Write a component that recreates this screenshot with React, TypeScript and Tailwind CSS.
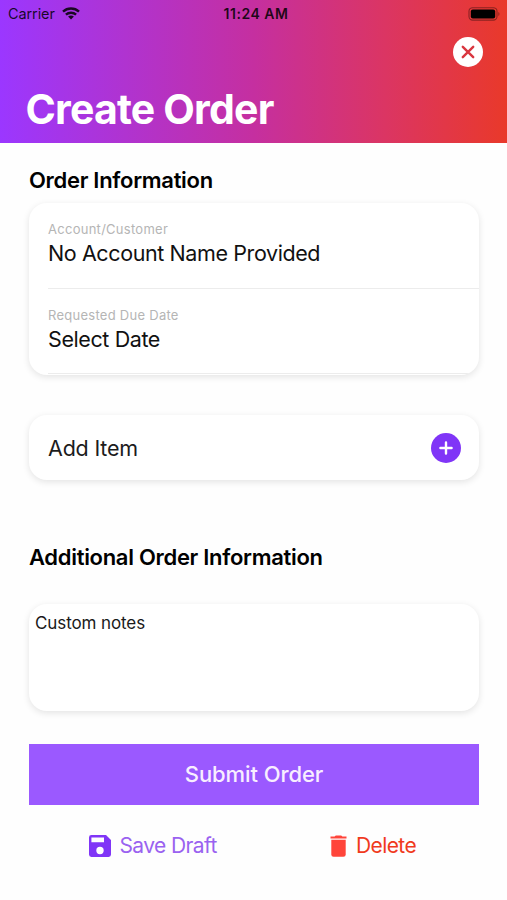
import { useState } from 'react';
import type { ReactNode } from 'react';

function StatusBar() {
  return (
    <div className="grid h-[27px] grid-cols-3 items-center pl-2 pr-[6px] text-black/85">
      <div className="flex items-center gap-[7px]">
        <span className="text-[14.5px] tracking-[-0.1px]">Carrier</span>
        <svg width="18" height="13" viewBox="0 0 18 13" fill="none" stroke="currentColor" strokeWidth="2.4">
          <path d="M1 4.6C5.5 0.4 12.5 0.4 17 4.6" />
          <path d="M3.9 7.7C6.8 5 11.2 5 14.1 7.7" />
          <path d="M9 12.4L6.1 9.6C7.7 8.1 10.3 8.1 11.9 9.6Z" fill="currentColor" stroke="none" />
        </svg>
      </div>
      <span className="pl-[3px] text-center text-[14px] font-semibold tracking-[0.5px]">11:24 AM</span>
      <svg className="justify-self-end" width="33" height="14" viewBox="0 0 33 14">
        <rect x="1" y="0.7" width="28" height="12.4" rx="3.6" fill="none" stroke="#000" strokeOpacity="0.4" strokeWidth="1.1" />
        <rect x="2.8" y="2.4" width="24.4" height="9" rx="2" fill="#000" />
        <path d="M30.4 4.9C31.8 5.4 31.8 8.4 30.4 8.9Z" fill="#000" fillOpacity="0.4" />
      </svg>
    </div>
  );
}

function Card({ className, children }: { className: string; children: ReactNode }) {
  return (
    <div className={`rounded-[18px] bg-white shadow-[0_2px_7px_rgba(0,0,0,0.11)] ${className}`}>
      {children}
    </div>
  );
}

function Field({ label, value }: { label: string; value: string }) {
  return (
    <div className="ml-[19px] h-[85.5px] border-b border-[#ececec] pt-[17px]">
      <div className="text-[13px] leading-[18px] tracking-[0.27px] text-[#b5b5b5]">{label}</div>
      <div className="text-[21.5px] leading-[30px] tracking-[-0.4px] text-[#111]">{value}</div>
    </div>
  );
}

export default function App() {
  const [notes, setNotes] = useState('Custom notes');

  return (
    <div className="h-[900px] w-full overflow-hidden bg-[#fefefe] font-['Inter','Liberation_Sans',sans-serif] text-black">
      <header className="h-[142.5px] bg-[linear-gradient(90deg,#9b37ff_0%,#c52fa0_50%,#db3563_76%,#e9392a_100%)]">
        <StatusBar />
        <div className="flex justify-end pr-[24px] pt-[10px]">
          <button aria-label="Close" className="flex h-[30px] w-[30px] items-center justify-center rounded-full bg-white">
            <svg width="14" height="14" viewBox="0 0 14 14" stroke="#d9363f" strokeWidth="2.4" strokeLinecap="round">
              <path d="M1.8 1.8L12.2 12.2M12.2 1.8L1.8 12.2" />
            </svg>
          </button>
        </div>
        <h1 className="pl-[25.5px] pt-[17px] text-[41px] font-bold leading-[50px] tracking-[-0.8px] text-white">Create Order</h1>
      </header>

      <main className="pl-[29px] pr-[28px] pt-[23.5px]">
        <h2 className="text-[22px] font-semibold leading-[28px] tracking-[-0.3px]">Order Information</h2>
        <Card className="mt-[9px] h-[172px] overflow-hidden">
          <Field label="Account/Customer" value="No Account Name Provided" />
          <Field label="Requested Due Date" value="Select Date" />
        </Card>

        <Card className="mt-[40px] flex h-[65px] items-center justify-between pl-[19px] pr-[18px]">
          <span className="pt-px text-[21.5px] tracking-[-0.2px] text-[#1c1c1c]">Add Item</span>
          <button aria-label="Add item" className="flex h-[30px] w-[30px] items-center justify-center rounded-full bg-[#8035f7]">
            <svg width="14" height="14" viewBox="0 0 14 14" stroke="#fff" strokeWidth="2.4" strokeLinecap="round">
              <path d="M7 1.4V12.6M1.4 7H12.6" />
            </svg>
          </button>
        </Card>

        <h2 className="mt-[63px] text-[22px] font-semibold leading-[28px] tracking-[-0.3px]">Additional Order Information</h2>
        <Card className="mt-[32.5px] h-[107.5px]">
          <textarea
            value={notes}
            onChange={(e) => setNotes(e.target.value)}
            className="block h-full w-full resize-none px-[6px] py-[8px] text-[17px] leading-[22px] tracking-[-0.1px] text-[#1a1a1a] outline-none"
          />
        </Card>

        <button className="mt-[32.5px] block h-[61px] w-full bg-[#9b59ff] text-[22px] font-medium tracking-[-0.1px] text-[#f8eeff]">
          Submit Order
        </button>

        <div className="flex pt-[25px] text-[21px] leading-[32px] tracking-[-0.6px]">
          <div className="w-[300.5px] pl-[59.5px]">
            <button className="flex items-center gap-[9px] text-[#9a62f0]">
              <svg width="22" height="22" viewBox="0 0 22 22">
                <path fillRule="evenodd" fill="#8035f7" d="M2.4 0H17L22 5V19.6Q22 22 19.6 22H2.4Q0 22 0 19.6V2.4Q0 0 2.4 0ZM2.4 2.6V7.2H15V2.6ZM11 11.8A3.7 3.7 0 1 0 11 19.2A3.7 3.7 0 1 0 11 11.8Z" />
              </svg>
              <span className="whitespace-nowrap">Save Draft</span>
            </button>
          </div>
          <button className="flex items-center gap-[9.5px] text-[#f03a1d]">
            <svg width="17" height="22" viewBox="0 0 17 22" fill="#ff453a">
              <path d="M0.5 1.5H4.6L5.8 0.4H11.2L12.4 1.5H16.5V3.4H0.5Z" />
              <path d="M1.3 4.7H15.7V19.5Q15.7 21.8 13.4 21.8H3.6Q1.3 21.8 1.3 19.5Z" />
            </svg>
            <span className="whitespace-nowrap">Delete</span>
          </button>
        </div>
      </main>
    </div>
  );
}
